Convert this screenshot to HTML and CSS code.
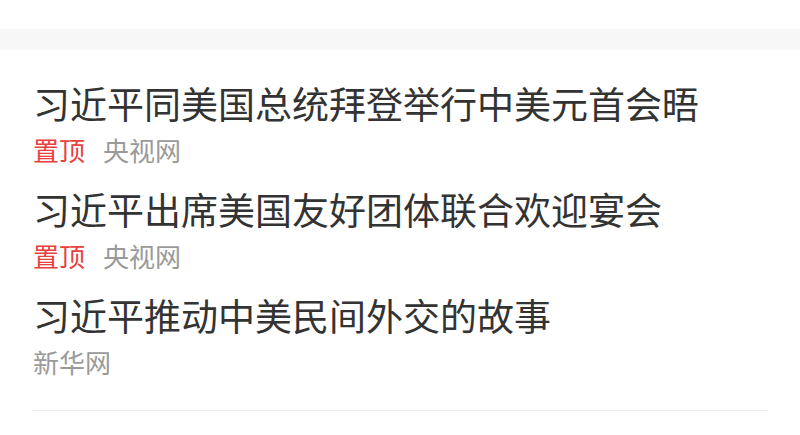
FILE: index.html
```html
<!DOCTYPE html>
<html lang="zh-CN">
<head>
<meta charset="utf-8">
<link rel="stylesheet" href="styles.css">
</head>
<body>
<div class="top"></div>
<div class="band"></div>
<ul class="news">
  <li class="item">
    <div class="title">习近平同美国总统拜登举行中美元首会晤</div>
    <div class="meta"><span class="tag">置顶</span><span class="src">央视网</span></div>
  </li>
  <li class="item">
    <div class="title">习近平出席美国友好团体联合欢迎宴会</div>
    <div class="meta"><span class="tag">置顶</span><span class="src">央视网</span></div>
  </li>
  <li class="item">
    <div class="title">习近平推动中美民间外交的故事</div>
    <div class="meta"><span class="src">新华网</span></div>
  </li>
</ul>
</body>
</html>
```
FILE: styles.css
```css
html, body {
  margin: 0;
  padding: 0;
  background: #ffffff;
  font-family: "Noto Sans CJK SC", "Noto Sans", sans-serif;
}
.top {
  height: 29px;
}
.band {
  height: 21px;
  background: #f7f7f7;
}
.news {
  list-style: none;
  margin: 0 33px;
  padding: 28px 0 26px;
  border-bottom: 1px solid #ececec;
  display: flex;
  flex-direction: column;
  gap: 12px;
}
.title {
  font-size: 37px;
  line-height: 50px;
  color: #333333;
  white-space: nowrap;
}
.meta {
  font-size: 26px;
  line-height: 44px;
  display: flex;
  gap: 18px;
}
.tag {
  color: #e8413d;
}
.src {
  color: #9a9a9a;
}
```
